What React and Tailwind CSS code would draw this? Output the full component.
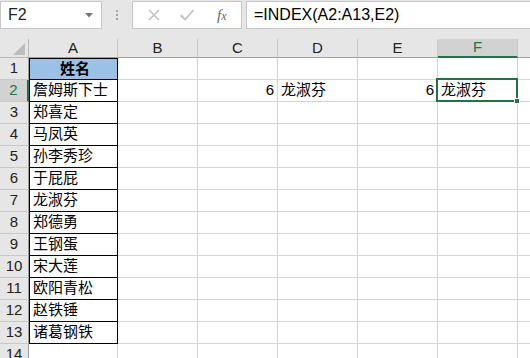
import React from "react";

const cols = ["A", "B", "C", "D", "E", "F", "G"];
const widths = ["w-[89px]", "w-[80px]", "w-[80px]", "w-[80px]", "w-[80px]", "w-[80px]", "w-[80px]"];
const names = ["詹姆斯下士", "郑喜定", "马凤英", "孙李秀珍", "于屁屁", "龙淑芬", "郑德勇", "王钢蛋", "宋大莲", "欧阳青松", "赵铁锤", "诸葛钢铁"];

const font = { fontFamily: '"Liberation Sans", "Noto Sans CJK SC", sans-serif' };

const Cell = ({ row, col }) => {
  const isA = col === 0;
  let content = null;
  let cls = "";
  if (isA && row === 1) {
    content = <span className="font-bold">姓名</span>;
    cls = "bg-[#9bc2e6] justify-center border-t border-t-black";
  } else if (isA && row <= 13) {
    content = names[row - 2];
  } else if (row === 2 && (col === 2 || col === 4)) {
    content = "6";
    cls = "justify-end pr-[3px]";
  } else if (row === 2 && col === 3) {
    content = "龙淑芬";
  }
  const border = isA && row <= 13 ? "border-r-black border-b-black border-l border-l-black" : "border-r-[#d4d4d4] border-b-[#d4d4d4]";
  const active = row === 2 && col === 5;
  return (
    <div
      className={`relative h-[22px] shrink-0 flex items-center pl-[3px] border-r border-b text-[15px] text-black whitespace-nowrap ${widths[col]} ${border} ${cls} ${active ? "z-10" : ""}`}
    >
      {content}
      {active && (
        <>
          <div className="absolute -left-[2px] -top-[2px] w-[82px] h-[24px] border-2 border-[#217346] pointer-events-none"></div>
          <div className="absolute -right-[3px] -bottom-[3px] w-[6px] h-[6px] bg-[#217346] border border-white"></div>
          <span>龙淑芬</span>
        </>
      )}
    </div>
  );
};

const App = () => {
  const rows = Array.from({ length: 14 }, (_, i) => i + 1);
  return (
    <div className="w-[530px] h-[358px] overflow-hidden bg-white select-none" style={font}>
      {/* formula bar */}
      <div className="h-[39px] bg-[#e6e6e6] flex items-start pt-[1px]">
        <div className="w-[102px] h-[28px] bg-white border border-[#c6c6c6] flex items-center justify-between pl-[7px] pr-[8px]">
          <span className="text-[16px] text-[#222]">F2</span>
          <svg width="8" height="5" viewBox="0 0 8 5">
            <path d="M0 0 L8 0 L4 4.5 Z" fill="#777" />
          </svg>
        </div>
        <div className="w-[30px] h-[28px] flex flex-col items-center justify-center gap-[2px]">
          <div className="w-[2px] h-[2px] bg-[#a8a8a8]"></div>
          <div className="w-[2px] h-[2px] bg-[#a8a8a8]"></div>
          <div className="w-[2px] h-[2px] bg-[#a8a8a8]"></div>
        </div>
        <div className="w-[110px] h-[28px] bg-white border border-[#c6c6c6] flex items-center pl-[13px]">
          <svg width="14" height="14" viewBox="0 0 14 14" className="ml-[1px]">
            <path d="M2 2 L12 12 M12 2 L2 12" stroke="#c2c2c2" strokeWidth="1.6" />
          </svg>
          <svg width="16" height="14" viewBox="0 0 16 14" className="ml-[18px]">
            <path d="M1.5 7 L6 11.5 L14.5 2" stroke="#c2c2c2" strokeWidth="1.8" fill="none" />
          </svg>
          <span className="ml-[22px] text-[15px] italic text-[#666]" style={{ fontFamily: '"Liberation Serif", serif' }}>
            f<span className="text-[12px]">x</span>
          </span>
        </div>
        <div className="ml-[4px] flex-1 h-[28px] bg-white border border-[#c6c6c6] border-r-0 flex items-center pl-[7px]">
          <span className="text-[16px] text-black">=INDEX(A2:A13,E2)</span>
        </div>
      </div>

      {/* column header */}
      <div className="flex h-[19px] bg-[#e6e6e6]">
        <div className="w-[29px] shrink-0 border-r border-b border-[#b8b8b8] flex items-end justify-end pr-[3px] pb-[2px]">
          <svg width="12" height="12" viewBox="0 0 12 12">
            <path d="M12 0 L12 12 L0 12 Z" fill="#bdbdbd" />
          </svg>
        </div>
        {cols.map((c, i) => (
          <div
            key={c}
            className={`shrink-0 flex items-center justify-center text-[15px] border-r border-[#c8c8c8] ${widths[i]} ${
              i === 5 ? "bg-[#d2d2d2] text-[#217346] border-b-2 border-b-[#217346]" : "text-[#222] border-b border-b-[#9e9e9e]"
            }`}
          >
            {c === "G" ? "" : c}
          </div>
        ))}
      </div>

      {/* rows */}
      {rows.map((r) => (
        <div key={r} className="flex">
          <div
            className={`w-[29px] h-[22px] shrink-0 flex items-center justify-center text-[15px] border-b border-[#c8c8c8] ${
              r === 2 ? "bg-[#d2d2d2] text-[#217346] border-r-2 border-r-[#217346]" : "bg-[#e6e6e6] text-[#222] border-r border-r-[#9e9e9e]"
            }`}
          >
            {r}
          </div>
          {cols.map((c, i) => (
            <Cell key={c} row={r} col={i} />
          ))}
        </div>
      ))}
    </div>
  );
};

export default App;
